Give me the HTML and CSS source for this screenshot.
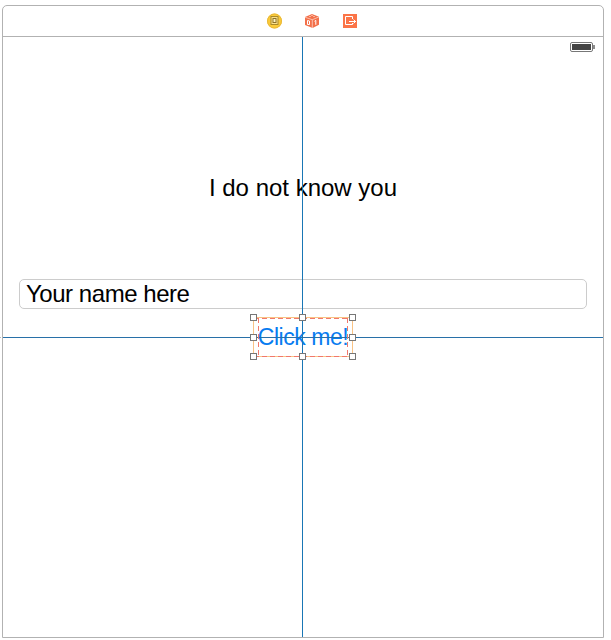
FILE: index.html
```
<!DOCTYPE html>
<html lang="en">
<head>
<meta charset="utf-8">
<title>View Controller</title>
<link rel="stylesheet" href="styles.css">
</head>
<body>
<main class="scene">
  <header class="dock">
    <svg class="icon" viewBox="0 0 16 16">
      <circle cx="8.500" cy="8" r="7.500" fill="#fbcb38"/>
      <circle cx="8.500" cy="8" r="7" fill="none" stroke="#e9b83a"/>
      <rect x="5" y="3.500" width="7" height="8" fill="#fbe08a" stroke="#a98a2c"/>
      <rect x="7" y="5.500" width="3" height="4" fill="#fff3c0" stroke="#8c7228"/>
    </svg>
    <svg class="icon" viewBox="0 0 16 16">
      <path d="M1 4 8 1l7 2.700v8L8.600 15 1 12Z" fill="#f3704a"/>
      <path d="M1 4.200 8.300 6.700 15 3.900M8.300 6.700V15" fill="none" stroke="#fde0d6" stroke-width=".7"/>
      <path d="M5 3.500h2M9 3.500h2M7 2.500h2" stroke="#fbc3b0" stroke-width=".8"/>
      <path d="M3.500 7.500v4h2v-3.500zM10.500 8.300l1.300-.9v4.400" fill="none" stroke="#fff"/>
    </svg>
    <svg class="icon" viewBox="0 0 16 16">
      <rect x="1" y="1" width="14" height="14" fill="#fb7447"/>
      <path d="M10.500 6V3.500h-7v8h7V10M7 8.500h7M11.500 6.500l2 2-2 2" fill="none" stroke="#fff"/>
    </svg>
  </header>
  <section class="canvas">
    <div class="status">
      <svg class="battery" viewBox="0 0 26 10">
        <rect x=".5" y=".5" width="22" height="9" rx="1.500" fill="#fff" stroke="#777"/>
        <rect x="2" y="2" width="19" height="6" fill="#444"/>
        <path d="M24 3v4" stroke="#666" stroke-width="1.500"/>
      </svg>
    </div>
    <p class="label"><span>I do not know you</span></p>
    <div class="field"><span>Your name here</span></div>
    <div class="button"><span>Click me!</span></div>
    <i class="guide-v"></i>
    <i class="guide-h"></i>
    <i class="tick"></i>
    <svg class="selection" viewBox="0 0 106 46">
      <rect x="3.500" y="3.500" width="99" height="39" fill="none" stroke="#f9c385"/>
      <path d="M8.500 4v39M97.500 4v39M4 4.500h98M4 42.500h98" fill="none" stroke="#f1786c" stroke-dasharray="5 3"/>
      <g fill="#fff" stroke="#777">
        <rect x=".5" y=".5" width="6" height="6"/><rect x="49.500" y=".5" width="6" height="6"/><rect x="99.500" y=".5" width="6" height="6"/>
        <rect x=".5" y="20.500" width="6" height="6"/><rect x="99.500" y="20.500" width="6" height="6"/>
        <rect x=".5" y="39.500" width="6" height="6"/><rect x="49.500" y="39.500" width="6" height="6"/><rect x="99.500" y="39.500" width="6" height="6"/>
      </g>
    </svg>
  </section>
</main>
</body>
</html>
```
FILE: styles.css
```
* { box-sizing: border-box; }
body {
  margin: 0;
  padding: 5px 7px 2px 2px;
  background: #fff;
  color: #000;
  font: 24px/30px "Liberation Sans", Arial, sans-serif;
}
.scene {
  width: 602px;
  height: 633px;
  border: 1px solid #b2b2b2;
  border-radius: 5px 5px 0 0;
}
.dock {
  display: flex;
  justify-content: center;
  align-items: center;
  gap: 22px;
  height: 31px;
  padding-left: 17px;
  border-bottom: 1px solid #b2b2b2;
}
.icon { width: 16px; height: 16px; }
.canvas {
  position: relative;
  display: flex;
  flex-direction: column;
  height: 600px;
  padding: 5px 16px 0;
}
.status {
  display: flex;
  justify-content: flex-end;
  height: 10px;
  margin-right: -9px;
}
.battery { width: 26px; height: 10px; }
.label {
  margin: 121px 0 0;
  text-align: center;
  letter-spacing: 0;
}
.field {
  height: 30px;
  margin-top: 76px;
  padding-left: 6px;
  border: 1px solid #ccc;
  border-radius: 5px;
  line-height: 28px;
  letter-spacing: -.46px;
}
.button {
  align-self: center;
  height: 40px;
  margin-top: 8px;
  color: #087cf0;
  font-size: 23px;
  line-height: 41px;
  letter-spacing: -.45px;
  white-space: nowrap;
}
.guide-v {
  position: absolute;
  left: 299px;
  top: 0;
  width: 1px;
  height: 600px;
  background: #1976b5;
}
.guide-h {
  position: absolute;
  left: 0;
  top: 300px;
  width: 600px;
  height: 1px;
  background: #2870a8;
}
.tick {
  position: absolute;
  left: -3px;
  top: 300px;
  width: 1px;
  height: 1px;
  background: #bbb;
}
.selection {
  position: absolute;
  left: 247px;
  top: 277px;
  width: 106px;
  height: 46px;
}
```
